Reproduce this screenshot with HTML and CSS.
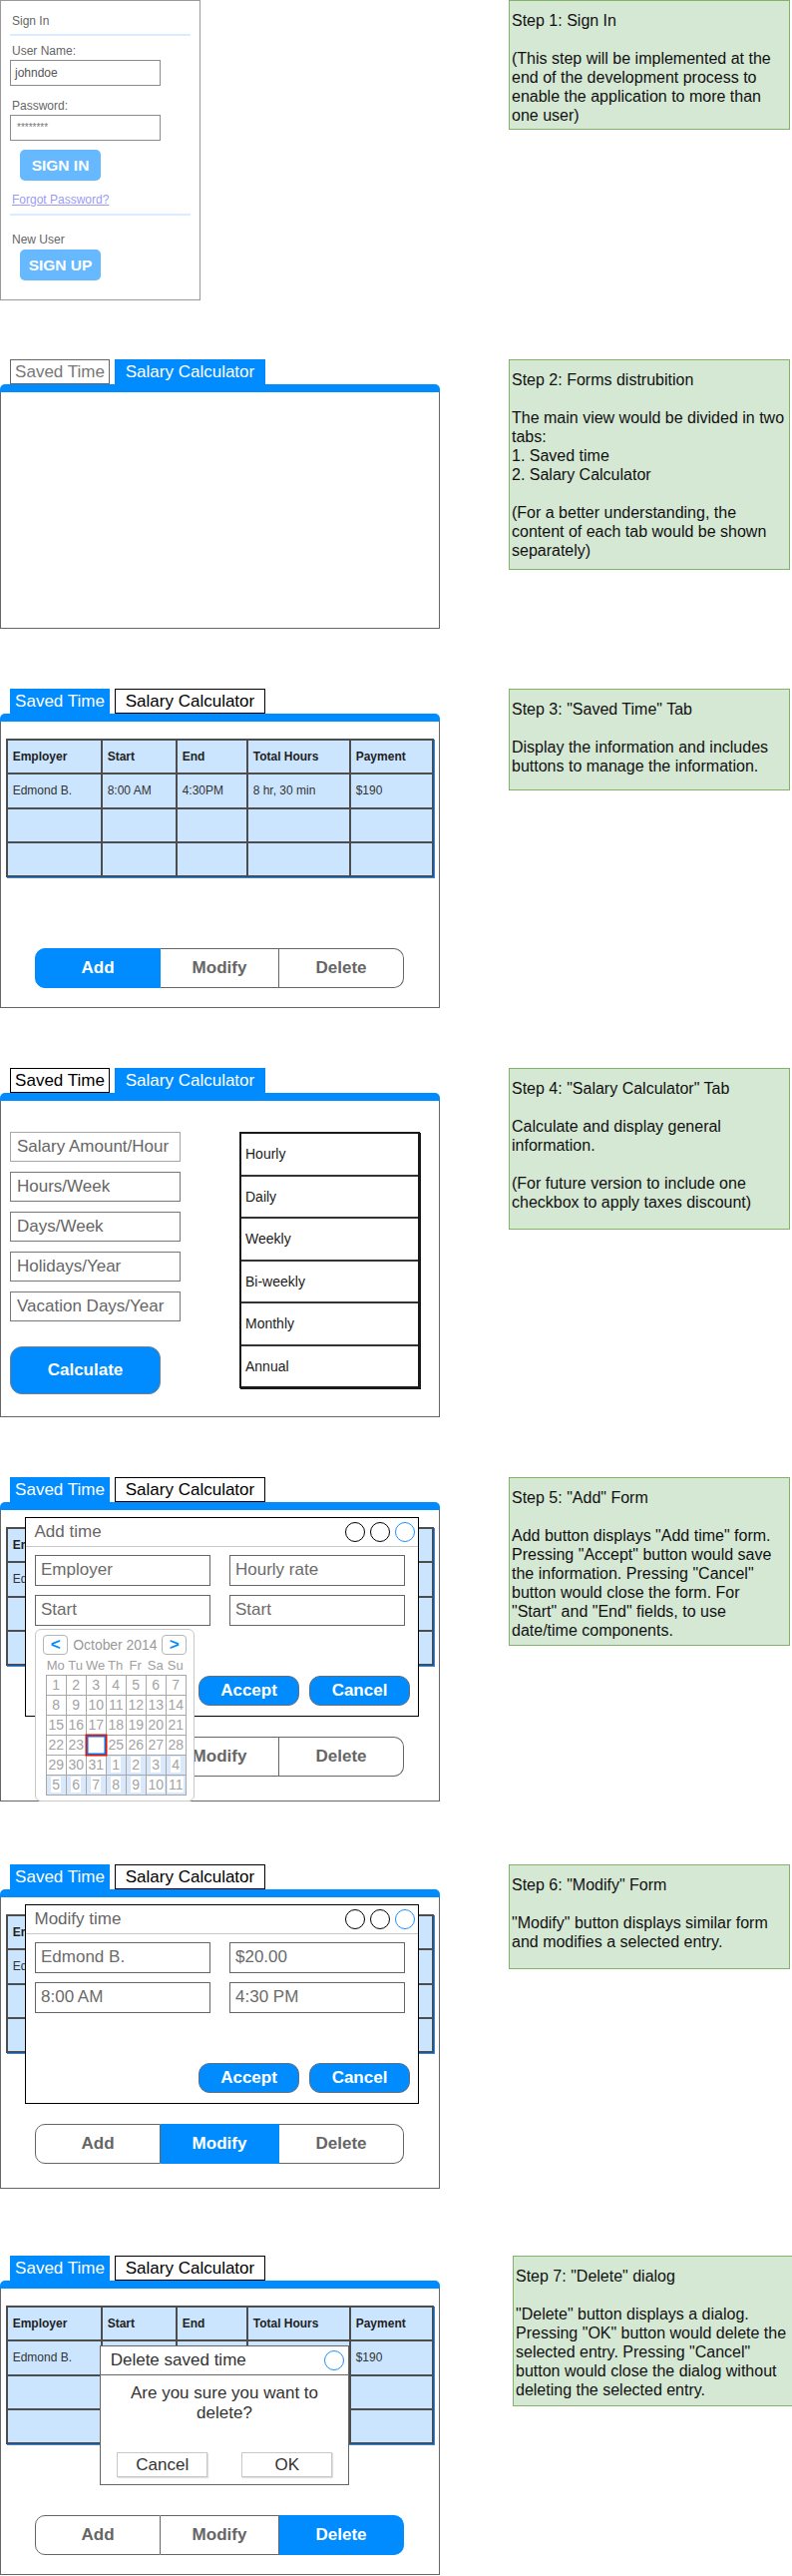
FILE: index.html
```html
<!DOCTYPE html>
<html lang="en">
<head>
<meta charset="utf-8">
<title>Salary App Mockup</title>
<link rel="stylesheet" href="styles.css">
</head>
<body>

<section class="row r1">
  <div class="left">
    <div class="signin">
      <div class="si-title">Sign In</div>
      <div class="si-sep"></div>
      <div class="si-label l1">User Name:</div>
      <div class="si-input">johndoe</div>
      <div class="si-label l2">Password:</div>
      <div class="si-input pw">********</div>
      <div class="si-btn b1">SIGN IN</div>
      <div class="si-link">Forgot Password?</div>
      <div class="si-sep s2"></div>
      <div class="si-label l3">New User</div>
      <div class="si-btn b2">SIGN UP</div>
    </div>
  </div>
  <div class="note n1">
    <p>Step 1: Sign In</p>
    <p class="gap">(This step will be implemented at the end of the development process to enable the application to more than one user)</p>
  </div>
</section>

<section class="row r2">
  <div class="left">
    <div class="mock">
      <div class="tabs"><div class="tab t1 dim">Saved Time</div><div class="tab t2 on">Salary Calculator</div></div>
      <div class="bar"></div>
      <div class="panel p2"></div>
    </div>
  </div>
  <div class="note n2">
    <p>Step 2: Forms distrubition</p>
    <p class="gap">The main view would be divided in two tabs:<br>1. Saved time<br>2. Salary Calculator</p>
    <p class="gap">(For a better understanding, the content of each tab would be shown separately)</p>
  </div>
</section>

<section class="row r3">
  <div class="left">
    <div class="mock">
      <div class="tabs"><div class="tab t1 on">Saved Time</div><div class="tab t2">Salary Calculator</div></div>
      <div class="bar"></div>
      <div class="panel tbl p3">
        <div class="table">
          <div class="th">Employer</div><div class="th">Start</div><div class="th">End</div><div class="th">Total Hours</div><div class="th">Payment</div>
          <div>Edmond B.</div><div>8:00 AM</div><div>4:30PM</div><div>8 hr, 30 min</div><div>$190</div>
          <div></div><div></div><div></div><div></div><div></div>
          <div></div><div></div><div></div><div></div><div></div>
        </div>
        <div class="seg"><div class="a on">Add</div><div class="m">Modify</div><div class="d">Delete</div></div>
      </div>
    </div>
  </div>
  <div class="note n3">
    <p>Step 3: "Saved Time" Tab</p>
    <p class="gap">Display the information and includes buttons to manage the information.</p>
  </div>
</section>

<section class="row r4">
  <div class="left">
    <div class="mock">
      <div class="tabs"><div class="tab t1">Saved Time</div><div class="tab t2 on">Salary Calculator</div></div>
      <div class="bar"></div>
      <div class="panel calc p4">
        <div class="inputs">
          <div class="inp first">Salary Amount/Hour</div>
          <div class="inp">Hours/Week</div>
          <div class="inp">Days/Week</div>
          <div class="inp">Holidays/Year</div>
          <div class="inp">Vacation Days/Year</div>
          <div class="calc-btn">Calculate</div>
        </div>
        <div class="list">
          <div>Hourly</div><div>Daily</div><div>Weekly</div><div>Bi-weekly</div><div>Monthly</div><div>Annual</div>
        </div>
      </div>
    </div>
  </div>
  <div class="note n4">
    <p>Step 4: "Salary Calculator" Tab</p>
    <p class="gap">Calculate and display general information.</p>
    <p class="gap">(For future version to include one checkbox to apply taxes discount)</p>
  </div>
</section>

<section class="row r5">
  <div class="left">
    <div class="mock">
      <div class="tabs"><div class="tab t1 on">Saved Time</div><div class="tab t2">Salary Calculator</div></div>
      <div class="bar"></div>
      <div class="panel tbl p5">
        <div class="table">
          <div class="th">Em</div><div></div><div></div><div></div><div></div>
          <div>Ed</div><div></div><div></div><div></div><div></div>
          <div></div><div></div><div></div><div></div><div></div>
          <div></div><div></div><div></div><div></div><div></div>
        </div>
        <div class="seg"><div class="a"></div><div class="m">Modify</div><div class="d">Delete</div></div>

        <div class="dlg form">
          <div class="dlg-head"><span class="dlg-title">Add time</span><div class="circles"><i class="c"></i><i class="c"></i><i class="c blue"></i></div></div>
          <div class="fields">
            <div class="field">Employer</div><div class="field">Hourly rate</div>
            <div class="field">Start</div><div class="field">Start</div>
          </div>
          <div class="dlg-btns"><div class="pill">Accept</div><div class="pill">Cancel</div></div>
        </div>

        <div class="cal">
          <div class="cal-nav"><span class="nb">&lt;</span><span class="month">October 2014</span><span class="nb">&gt;</span></div>
          <div class="cal-days"><span>Mo</span><span>Tu</span><span>We</span><span>Th</span><span>Fr</span><span>Sa</span><span>Su</span></div>
          <div class="cal-grid">
            <span>1</span><span>2</span><span>3</span><span>4</span><span>5</span><span>6</span><span>7</span>
            <span>8</span><span>9</span><span>10</span><span>11</span><span>12</span><span>13</span><span>14</span>
            <span>15</span><span>16</span><span>17</span><span>18</span><span>19</span><span>20</span><span>21</span>
            <span>22</span><span>23</span><span class="sel"></span><span>25</span><span>26</span><span>27</span><span>28</span>
            <span>29</span><span>30</span><span>31</span><span class="nx"><b>1</b></span><span class="nx"><b>2</b></span><span class="nx"><b>3</b></span><span class="nx"><b>4</b></span>
            <span class="nx"><b>5</b></span><span class="nx"><b>6</b></span><span class="nx"><b>7</b></span><span class="nx"><b>8</b></span><span class="nx"><b>9</b></span><span class="nx"><b>10</b></span><span class="nx"><b>11</b></span>
          </div>
        </div>
      </div>
    </div>
  </div>
  <div class="note n5">
    <p>Step 5: "Add" Form</p>
    <p class="gap">Add button displays "Add time" form. Pressing "Accept" button would save the information. Pressing "Cancel" button would close the form. For "Start" and "End" fields, to use date/time components.</p>
  </div>
</section>

<section class="row r6">
  <div class="left">
    <div class="mock">
      <div class="tabs"><div class="tab t1 on">Saved Time</div><div class="tab t2">Salary Calculator</div></div>
      <div class="bar"></div>
      <div class="panel tbl p6">
        <div class="table">
          <div class="th">Em</div><div></div><div></div><div></div><div></div>
          <div>Ed</div><div></div><div></div><div></div><div></div>
          <div></div><div></div><div></div><div></div><div></div>
          <div></div><div></div><div></div><div></div><div></div>
        </div>
        <div class="seg"><div class="a">Add</div><div class="m on">Modify</div><div class="d">Delete</div></div>

        <div class="dlg form">
          <div class="dlg-head"><span class="dlg-title">Modify time</span><div class="circles"><i class="c"></i><i class="c"></i><i class="c blue"></i></div></div>
          <div class="fields">
            <div class="field">Edmond B.</div><div class="field">$20.00</div>
            <div class="field">8:00 AM</div><div class="field">4:30 PM</div>
          </div>
          <div class="dlg-btns"><div class="pill">Accept</div><div class="pill">Cancel</div></div>
        </div>
      </div>
    </div>
  </div>
  <div class="note n6">
    <p>Step 6: "Modify" Form</p>
    <p class="gap">"Modify" button displays similar form and modifies a selected entry.</p>
  </div>
</section>

<section class="row r7">
  <div class="left">
    <div class="mock">
      <div class="tabs"><div class="tab t1 on">Saved Time</div><div class="tab t2">Salary Calculator</div></div>
      <div class="bar"></div>
      <div class="panel tbl p7">
        <div class="table">
          <div class="th">Employer</div><div class="th">Start</div><div class="th">End</div><div class="th">Total Hours</div><div class="th">Payment</div>
          <div>Edmond B.</div><div></div><div></div><div></div><div>$190</div>
          <div></div><div></div><div></div><div></div><div></div>
          <div></div><div></div><div></div><div></div><div></div>
        </div>
        <div class="seg"><div class="a">Add</div><div class="m">Modify</div><div class="d on">Delete</div></div>

        <div class="dlg del">
          <div class="del-head"><span class="del-title">Delete saved time</span><i class="c blue"></i></div>
          <div class="del-msg">Are you sure you want to delete?</div>
          <div class="del-btns"><div class="dbtn">Cancel</div><div class="dbtn">OK</div></div>
        </div>
      </div>
    </div>
  </div>
  <div class="note n7">
    <p>Step 7: "Delete" dialog</p>
    <p class="gap">"Delete" button displays a dialog. Pressing "OK" button would delete the selected entry. Pressing "Cancel" button would close the dialog without deleting the selected entry.</p>
  </div>
</section>

</body>
</html>
```

FILE: styles.css
```css
* { box-sizing: border-box; }

body {
  margin: 0;
  width: 794px;
  height: 2581px;
  background: #fff;
  font-family: "Liberation Sans", Arial, sans-serif;
  color: #000;
  overflow: hidden;
}

.row { display: flex; align-items: flex-start; }
.r1 { height: 360px; }
.r2 { height: 330px; }
.r3 { height: 380px; }
.r4 { height: 410px; }
.r5 { height: 388px; }
.r6 { height: 392px; }
.r7 { height: 321px; }

.left { width: 510px; flex: none; }

/* ---------- notes ---------- */
.note {
  width: 282px;
  flex: none;
  background: #d5e8d4;
  border: 1px solid #82b366;
  font-size: 16px;
  line-height: 19px;
  color: #111;
  padding: 10px 2px 0 2px;
}
.note p { margin: 0; }
.note p.gap { margin-top: 19px; }
.n1 { height: 130px; }
.n2 { height: 211px; }
.n3 { height: 102px; }
.n4 { height: 162px; }
.n5 { height: 169px; }
.n6 { height: 105px; }
.n7 { height: 151px; margin-left: 4px; }

/* ---------- sign in ---------- */
.signin {
  width: 201px;
  height: 301px;
  border: 1px solid #999;
  display: flex;
  flex-direction: column;
  font-size: 12px;
  line-height: 14px;
  color: #666;
}
.si-title { margin-top: 13px; padding-left: 11px; }
.si-sep { margin: 6px 0 0 9px; width: 181px; height: 2px; background: #dbecff; }
.si-sep.s2 { margin-top: 7px; }
.si-label { padding-left: 11px; }
.si-label.l1 { margin-top: 8px; }
.si-label.l2 { margin-top: 13px; }
.si-label.l3 { margin-top: 17px; }
.si-input {
  margin: 2px 0 0 9px;
  width: 151px;
  height: 26px;
  border: 1px solid #8c8c8c;
  padding-left: 4px;
  line-height: 24px;
  color: #555;
}
.si-input.pw { font-size: 10px; padding-left: 6px; color: #777; }
.si-btn {
  margin-left: 19px;
  width: 81px;
  height: 31px;
  border-radius: 5px;
  background: #66b8ff;
  color: #fff;
  font-weight: bold;
  font-size: 15.5px;
  line-height: 31px;
  text-align: center;
}
.si-btn.b1 { margin-top: 9px; }
.si-btn.b2 { margin-top: 3px; }
.si-link {
  margin-top: 12px;
  padding-left: 11px;
  color: #9b9bf5;
  text-decoration: underline;
}

/* ---------- tabbed window ---------- */
.mock { width: 441px; }
.tabs { display: flex; gap: 5px; padding-left: 10px; height: 25px; }
.tab {
  height: 25px;
  border: 1px solid #000;
  font-size: 17px;
  line-height: 23px;
  text-align: center;
  white-space: nowrap;
  background: #fff;
  color: #000;
}
.tab.t1 { width: 100px; }
.tab.t2 { width: 151px; }
.tab.dim { border-color: #666; color: #777; }
.tab.on { background: #008cff; border-color: #008cff; color: #fff; }
.bar { height: 8px; background: #008cff; border-radius: 5px 5px 0 0; }
.panel { position: relative; border: 1px solid #666; border-top: 0; }
.p2 { height: 237px; }
.p3 { height: 287px; }
.p4 { height: 317px; }
.p5 { height: 292px; }
.p6 { height: 292px; }
.p7 { height: 287px; }

/* ---------- table ---------- */
.panel.tbl { padding-top: 17px; }
.table {
  display: grid;
  grid-template-columns: 93px 73px 69px 101px 81px;
  grid-template-rows: repeat(4, 32.25px);
  gap: 2px;
  padding: 2px;
  width: max-content;
  margin-left: 4.7px;
  background: #4d4d4d;
  box-shadow: 1px 1px 0 #1a8cff;
}
.table > div {
  background: #cce5ff;
  font-size: 12px;
  color: #333;
  display: flex;
  align-items: center;
  padding-left: 5px;
  white-space: nowrap;
}
.table > .th { font-weight: bold; color: #222; }

/* ---------- segmented buttons ---------- */
.seg { display: flex; width: 370px; height: 40px; margin: 71px 0 0 34px; }
.seg > div {
  display: flex;
  align-items: center;
  justify-content: center;
  border: 1px solid #666;
  border-left: 0;
  font-weight: bold;
  font-size: 17px;
  color: #666;
  background: #fff;
}
.seg > .a { width: 126px; border-left: 1px solid #666; border-radius: 10px 0 0 10px; }
.seg > .m { width: 119px; }
.seg > .d { flex: 1; border-radius: 0 10px 10px 0; }
.seg > .on { background: #008cff; border-color: #008cff; color: #fff; }

/* ---------- calculator ---------- */
.panel.calc { display: flex; align-items: flex-start; padding-top: 31px; }
.inputs { margin-left: 9px; width: 171px; display: flex; flex-direction: column; gap: 10px; }
.inp {
  height: 30px;
  border: 1px solid #777;
  font-size: 17px;
  line-height: 28px;
  color: #666;
  padding-left: 6px;
  white-space: nowrap;
}
.inp.first { border-color: #a6a6a6; }
.calc-btn {
  margin-top: 15px;
  width: 151px;
  height: 48px;
  border-radius: 12px;
  border: 1px solid #6d7f91;
  background: #008cff;
  color: #fff;
  font-weight: bold;
  font-size: 17px;
  line-height: 46px;
  text-align: center;
}
.list {
  margin-left: 59px;
  width: 181px;
  height: 257px;
  border: 2px solid #1a1a1a;
  box-shadow: 1px 1px 0 #1a1a1a;
  display: flex;
  flex-direction: column;
}
.list > div {
  flex: 1;
  border-top: 2px solid #333;
  display: flex;
  align-items: center;
  padding-left: 4px;
  font-size: 14px;
  color: #1a1a1a;
}
.list > div:first-child { border-top: 0; }

/* ---------- dialogs ---------- */
.dlg { position: absolute; background: #fff; z-index: 2; }
.dlg.form {
  left: 24px;
  top: 7px;
  width: 395px;
  height: 200px;
  border: 1.5px solid #000;
}
.dlg-head {
  height: 30px;
  margin-top: -1.5px;
  padding-top: 1.5px;
  border-bottom: 1px solid #c8c8c8;
  display: flex;
  align-items: center;
  justify-content: space-between;
}
.dlg-title { margin-left: 8.5px; font-size: 17px; color: #666; }
.circles { display: flex; gap: 5px; margin-right: 3.5px; }
.c {
  display: block;
  width: 20px;
  height: 20px;
  border-radius: 50%;
  border: 1.5px solid #000;
}
.c.blue { border-color: #1e8fff; }
.fields {
  display: grid;
  grid-template-columns: 176px 176px;
  grid-auto-rows: 31px;
  column-gap: 19px;
  row-gap: 9px;
  margin: 8.5px 0 0 8.5px;
}
.field {
  border: 1.5px solid #666;
  font-size: 17px;
  line-height: 28px;
  color: #6b6b6b;
  padding-left: 5.5px;
  white-space: nowrap;
}
.dlg-btns { display: flex; justify-content: flex-end; gap: 10px; margin: 49.5px 8px 0 0; }
.pill {
  width: 101px;
  height: 30px;
  border-radius: 11px;
  border: 1px solid #5f6f80;
  background: #008cff;
  color: #fff;
  font-weight: bold;
  font-size: 17px;
  line-height: 28px;
  text-align: center;
}

/* ---------- calendar ---------- */
.cal {
  position: absolute;
  left: 34px;
  top: 119px;
  width: 160px;
  height: 173px;
  z-index: 3;
  background: #fff;
  border: 1px solid #c8c8c8;
  border-radius: 6px;
  padding: 5.3px 0 0 7.3px;
}
.cal-nav { display: flex; align-items: center; gap: 5px; height: 20px; }
.nb {
  width: 25px;
  height: 20px;
  border: 1px solid #b5b5b5;
  border-radius: 4px;
  color: #008cff;
  font-weight: bold;
  font-size: 17px;
  line-height: 17px;
  text-align: center;
}
.month { width: 84px; font-size: 13.9px; color: #999; white-space: nowrap; }
.cal-days {
  display: grid;
  grid-template-columns: repeat(7, 20px);
  margin: 4px 0 0 2.4px;
  font-size: 13px;
  line-height: 14px;
  color: #a0a0a0;
  text-align: center;
}
.cal-grid {
  display: grid;
  grid-template-columns: repeat(7, 19px);
  grid-auto-rows: 19px;
  gap: 1px;
  padding: 1px;
  width: max-content;
  margin: 1.5px 0 0 2.4px;
  background: #a8a8a8;
}
.cal-grid > span {
  background: #fff;
  font-size: 14px;
  line-height: 19px;
  text-align: center;
  color: #a3a3a3;
}
.cal-grid > .nx { background: #dae8fc; }
.cal-grid > .nx b { font-weight: normal; background: #fff; padding: 0 1px; }
.cal-grid > .sel {
  position: relative;
  z-index: 1;
  box-shadow: 0 0 0 1.5px #e51400, inset 0 0 0 1.5px #1a6fdf;
}

/* ---------- delete dialog ---------- */
.dlg.del {
  left: 99px;
  top: 57px;
  width: 250px;
  height: 140px;
  border: 1px solid #666;
}
.del-head {
  height: 30px;
  margin-top: -1px;
  padding-top: 1px;
  border-bottom: 1px solid #666;
  display: flex;
  align-items: center;
  justify-content: space-between;
  padding-right: 3.7px;
}
.del-title { margin-left: 9.7px; font-size: 17px; color: #333; }
.del-msg {
  margin-top: 8.3px;
  padding: 0 10px;
  font-size: 17px;
  line-height: 20px;
  text-align: center;
  color: #333;
}
.del-btns { display: flex; gap: 34px; margin: 29px 0 0 16.3px; }
.dbtn {
  width: 91px;
  height: 25px;
  border: 1px solid #c8c8c8;
  box-shadow: 1px 1px 1px rgba(0, 0, 0, 0.12);
  font-size: 17px;
  line-height: 23px;
  text-align: center;
  color: #333;
}
```
